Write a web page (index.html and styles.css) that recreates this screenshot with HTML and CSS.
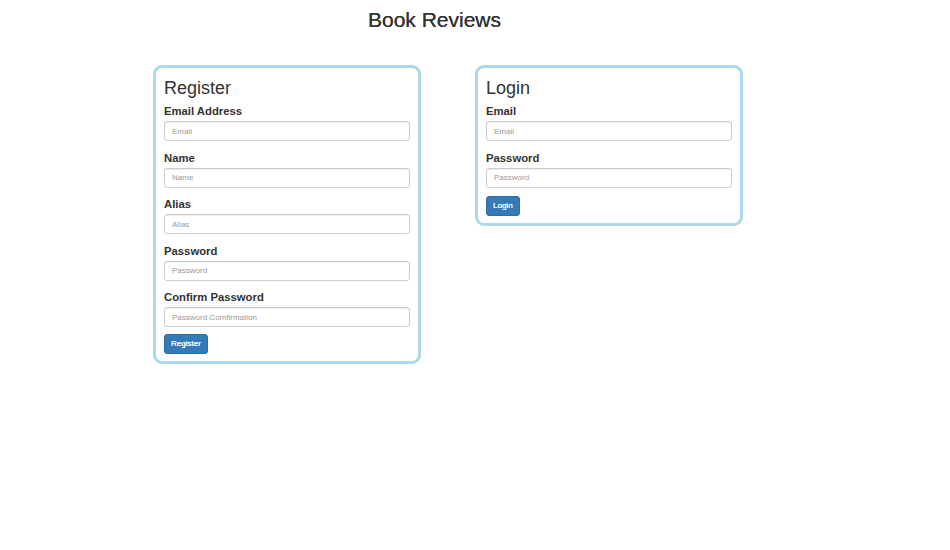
FILE: index.html
```html
<!DOCTYPE html>
<html>
<head>
<meta charset="utf-8">
<title>Book Reviews</title>
<link rel="stylesheet" href="styles.css">
</head>
<body>
<header class="page-header">
  <h1 class="page-title">Book Reviews</h1>
</header>
<main class="cards">
  <section class="card">
    <h2 class="card-title">Register</h2>
    <form class="form">
      <div class="form-group">
        <label class="form-label">Email Address</label>
        <input class="form-input" type="text" placeholder="Email">
      </div>
      <div class="form-group">
        <label class="form-label">Name</label>
        <input class="form-input" type="text" placeholder="Name">
      </div>
      <div class="form-group">
        <label class="form-label">Alias</label>
        <input class="form-input" type="text" placeholder="Alias">
      </div>
      <div class="form-group">
        <label class="form-label">Password</label>
        <input class="form-input" type="password" placeholder="Password">
      </div>
      <div class="form-group form-group-last">
        <label class="form-label">Confirm Password</label>
        <input class="form-input" type="password" placeholder="Password Comfirmation">
      </div>
      <button class="btn" type="button">Register</button>
    </form>
  </section>
  <section class="card">
    <h2 class="card-title">Login</h2>
    <form class="form">
      <div class="form-group">
        <label class="form-label">Email</label>
        <input class="form-input" type="text" placeholder="Email">
      </div>
      <div class="form-group">
        <label class="form-label">Password</label>
        <input class="form-input" type="password" placeholder="Password">
      </div>
      <button class="btn" type="button">Login</button>
    </form>
  </section>
</main>
</body>
</html>
```

FILE: styles.css
```css
* { box-sizing: border-box; }

body {
  margin: 0;
  background: #fff;
  color: #333;
  font-family: "Liberation Sans", Arial, Helvetica, sans-serif;
}

.page-header {
  width: 869px;
  text-align: center;
  padding-top: 8px;
}

.page-title {
  margin: 0;
  font-size: 21px;
  line-height: 24px;
  font-weight: normal;
  color: #333;
  text-shadow: 0 0 0.4px #333;
}

.cards {
  display: flex;
  align-items: flex-start;
  gap: 54px;
  margin-top: 33px;
  padding-left: 153px;
}

.card {
  width: 268px;
  border: 3px solid #acd9e7;
  border-radius: 9px;
  padding: 10px 8px 7px 8px;
  background: #fff;
}

.card-title {
  margin: 0 0 5px 0;
  font-size: 18px;
  line-height: 20px;
  font-weight: normal;
  color: #333;
}

.form { margin: 0; }

.form-group {
  margin-bottom: 8.5px;
}

.form-group-last {
  margin-bottom: 7px;
}

.form-label {
  display: block;
  font-size: 11.3px;
  line-height: 16px;
  font-weight: bold;
  margin-bottom: 2px;
  color: #333;
}

.form-input {
  display: block;
  width: 100%;
  height: 20px;
  padding: 0 7px;
  border: 1px solid #ccc;
  border-radius: 3px;
  font-family: inherit;
  font-size: 8px;
  color: #555;
  box-shadow: inset 0 1px 1px rgba(0,0,0,0.075);
  outline: none;
}

.form-input::placeholder {
  color: #999;
}

.btn {
  display: block;
  height: 20px;
  padding: 0 6px;
  border: 1px solid #2e6da4;
  border-radius: 3px;
  background: #337ab7;
  color: #fff;
  font-family: inherit;
  font-size: 8px;
  line-height: 18px;
  text-shadow: 0 0 0.4px #fff;
  cursor: pointer;
}
```
